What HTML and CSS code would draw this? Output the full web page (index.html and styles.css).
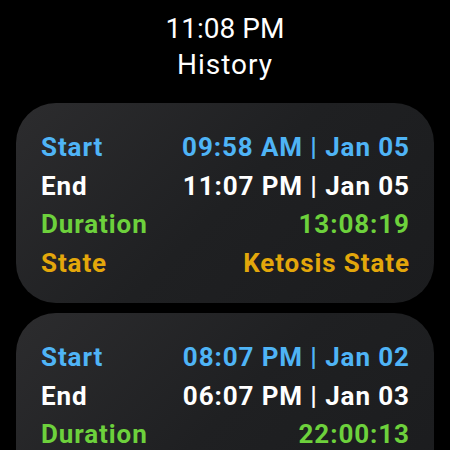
FILE: index.html
```html
<!DOCTYPE html>
<html>
<head lang="en">
    <meta charset="UTF-8">
    <title>History</title>
    <link rel="stylesheet" href="styles.css">
</head>
<body>
<div class="screen">
    <div class="top">
        <div class="clock">11:08 PM</div>
        <div class="title">History</div>
    </div>
    <div class="list">
        <div class="card">
            <div class="row start"><span>Start</span><span>09:58 AM | Jan 05</span></div>
            <div class="row end"><span>End</span><span>11:07 PM | Jan 05</span></div>
            <div class="row duration"><span>Duration</span><span>13:08:19</span></div>
            <div class="row state"><span>State</span><span>Ketosis State</span></div>
        </div>
        <div class="card">
            <div class="row start"><span>Start</span><span>08:07 PM | Jan 02</span></div>
            <div class="row end"><span>End</span><span>06:07 PM | Jan 03</span></div>
            <div class="row duration"><span>Duration</span><span>22:00:13</span></div>
            <div class="row state"><span>State</span><span>Ketosis State</span></div>
        </div>
    </div>
</div>
</body>
</html>
```

FILE: styles.css
```css
* {
    margin: 0;
    padding: 0;
    box-sizing: border-box;
}
html, body {
    background: #000;
    height: 100%;
    overflow: hidden;
}
body {
    font-family: Roboto, "Noto Sans", sans-serif;
    color: #fff;
}
/*标题*/
.top {
    display: flex;
    flex-direction: column;
    align-items: center;
    padding-top: 11px;
}
.clock,
.title {
    font-size: 28px;
    line-height: 36px;
    font-weight: 400;
}
.title {
    letter-spacing: 1px;
}
/*记录卡片*/
.list {
    display: flex;
    flex-direction: column;
    gap: 10px;
    padding: 20px 16px 0;
}
.card {
    height: 200px;
    padding: 25px 25px 0;
    border-radius: 40px;
    background: linear-gradient(135deg, #2c2c2e 0%, #1f2022 50%, #1b1c1e 100%);
}
.row {
    display: flex;
    justify-content: space-between;
    font-size: 26px;
    font-weight: 700;
    line-height: 38.5px;
    letter-spacing: 0.9px;
}
.row span:last-child {
    margin-right: -0.9px;
}
.start { color: #4fb4f6; }
.end { color: #ffffff; }
.duration { color: #6dd13c; }
.state { color: #e3a70b; }
```
